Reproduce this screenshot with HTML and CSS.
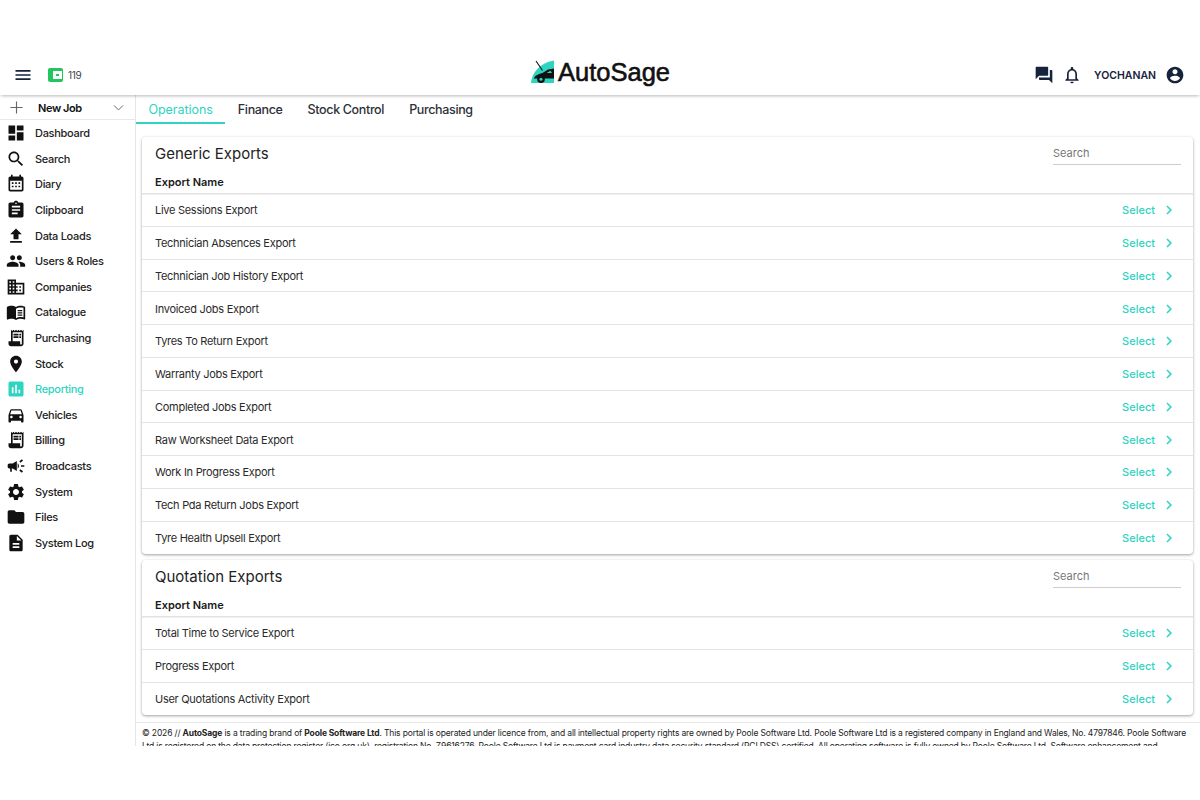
FILE: index.html
```html
<!DOCTYPE html>
<html lang="en">
<head>
<meta charset="utf-8">
<title>AutoSage</title>
<link rel="stylesheet" href="styles.css">
</head>
<body>
<svg class="defs" width="0" height="0" aria-hidden="true">
<symbol id="chev" viewBox="0 0 24 24"><path d="M10 6L8.590 7.410 13.170 12l-4.580 4.590L10 18l6-6z"/></symbol>
</svg>
<header class="topbar">
  <div class="top-left">
    <svg class="ico menu" viewBox="0 0 24 24"><path d="M3 18h18v-2H3v2zm0-5h18v-2H3v2zm0-7v2h18V6H3z"/></svg>
    <span class="wallet"><span class="wallet-in"></span></span>
    <span class="count">119</span>
  </div>
  <div class="logo">
    <svg class="logo-mark" viewBox="0 0 25 24"><path fill="#2dd4bf" d="M1 23C1.500 14 9 3 24 0.500V23z"/><path fill="none" stroke="#111" stroke-width="1.100" d="M6 1L12.500 10.500"/><path fill="#111" d="M4 18C5.500 15 9 14 12.500 13L18 9.500L24 8.500V18.500H4z"/><path fill="#2dd4bf" d="M16.500 13L20.500 10.800L22 13z"/><circle cx="11" cy="19.300" r="3.800" fill="#111"/><circle cx="11" cy="19.300" r="1.500" fill="#2dd4bf"/></svg>
    <span class="logo-text">AutoSage</span>
  </div>
  <div class="top-right">
    <svg class="ico" viewBox="0 0 24 24"><path d="M21 6h-2v9H6v2c0 .55.45 1 1 1h11l4 4V7c0-.55-.45-1-1-1zm-4 6V3c0-.55-.45-1-1-1H3c-.55 0-1 .45-1 1v14l4-4h10c.55 0 1-.45 1-1z"/></svg>
    <svg class="ico" viewBox="0 0 24 24"><path d="M12 22c1.100 0 2-.9 2-2h-4c0 1.100.9 2 2 2zm6-6v-5c0-3.070-1.630-5.640-4.500-6.320V4c0-.83-.67-1.500-1.500-1.500s-1.500.67-1.500 1.500v.68C7.640 5.360 6 7.920 6 11v5l-2 2v1h16v-1l-2-2zm-2 1H8v-6c0-2.480 1.510-4.500 4-4.500s4 2.020 4 4.500v6z"/></svg>
    <span class="user">YOCHANAN</span>
    <svg class="ico" viewBox="0 0 24 24"><path d="M12 2C6.480 2 2 6.480 2 12s4.480 10 10 10 10-4.480 10-10S17.520 2 12 2zm0 3c1.660 0 3 1.340 3 3s-1.340 3-3 3-3-1.340-3-3 1.340-3 3-3zm0 14.200c-2.500 0-4.710-1.280-6-3.220.03-1.990 4-3.080 6-3.080 1.990 0 5.970 1.090 6 3.080-1.290 1.940-3.500 3.220-6 3.220z"/></svg>
  </div>
</header>
<div class="shell">
  <aside class="side">
    <div class="newjob">
      <svg class="thin" viewBox="0 0 16 16"><path d="M8 1.500v13M1.500 8h13"/></svg>
      <span class="newjob-label">New Job</span>
      <svg class="thin small" viewBox="0 0 16 16"><path d="M2.500 5.500L8 11l5.500-5.500"/></svg>
    </div>
    <nav class="nav">
      <a class="item"><svg viewBox="0 0 24 24"><path d="M3 13h8V3H3v10zm0 8h8v-6H3v6zm10 0h8V11h-8v10zm0-18v6h8V3h-8z"/></svg>Dashboard</a>
      <a class="item"><svg viewBox="0 0 24 24"><path d="M15.500 14h-.79l-.28-.27C15.410 12.590 16 11.110 16 9.500 16 5.910 13.090 3 9.500 3S3 5.910 3 9.500 5.910 16 9.500 16c1.610 0 3.090-.59 4.230-1.570l.27.28v.79l5 4.990L20.490 19l-4.990-5zm-6 0C7.010 14 5 11.990 5 9.500S7.010 5 9.500 5 14 7.010 14 9.500 11.990 14 9.500 14z"/></svg>Search</a>
      <a class="item"><svg viewBox="0 0 24 24"><path d="M19 3h-1V1h-2v2H8V1H6v2H5c-1.110 0-1.990.9-1.990 2L3 19c0 1.100.89 2 2 2h14c1.100 0 2-.9 2-2V5c0-1.100-.9-2-2-2zm0 16H5V8h14v11zM7 10h2v2H7zm4 0h2v2h-2zm4 0h2v2h-2zm-8 4h2v2H7zm4 0h2v2h-2zm4 0h2v2h-2z"/></svg>Diary</a>
      <a class="item"><svg viewBox="0 0 24 24"><path d="M19 3h-4.180C14.400 1.840 13.300 1 12 1c-1.300 0-2.400.84-2.820 2H5c-1.100 0-2 .9-2 2v14c0 1.100.9 2 2 2h14c1.100 0 2-.9 2-2V5c0-1.100-.9-2-2-2zm-7 0c.55 0 1 .45 1 1s-.45 1-1 1-1-.45-1-1 .45-1 1-1zm2 14H7v-2h7v2zm3-4H7v-2h10v2zm0-4H7V7h10v2z"/></svg>Clipboard</a>
      <a class="item"><svg viewBox="0 0 24 24"><path d="M9 16h6v-6h4l-7-7-7 7h4zm-4 2h14v2H5z"/></svg>Data Loads</a>
      <a class="item"><svg viewBox="0 0 24 24"><path d="M16 11c1.660 0 2.990-1.340 2.990-3S17.660 5 16 5c-1.660 0-3 1.340-3 3s1.340 3 3 3zm-8 0c1.660 0 2.990-1.340 2.990-3S9.660 5 8 5C6.340 5 5 6.340 5 8s1.340 3 3 3zm0 2c-2.330 0-7 1.170-7 3.500V19h14v-2.500c0-2.330-4.670-3.500-7-3.500zm8 0c-.29 0-.62.02-.97.05 1.160.84 1.970 1.970 1.970 3.450V19h6v-2.500c0-2.330-4.670-3.500-7-3.500z"/></svg>Users &amp; Roles</a>
      <a class="item"><svg viewBox="0 0 24 24"><path d="M12 7V3H2v18h20V7H12zM6 19H4v-2h2v2zm0-4H4v-2h2v2zm0-4H4V9h2v2zm0-4H4V5h2v2zm4 12H8v-2h2v2zm0-4H8v-2h2v2zm0-4H8V9h2v2zm0-4H8V5h2v2zm10 12h-8v-2h2v-2h-2v-2h2v-2h-2V9h8v10zm-2-8h-2v2h2v-2zm0 4h-2v2h2v-2z"/></svg>Companies</a>
      <a class="item"><svg viewBox="0 0 24 24"><path d="M21 5c-1.110-.35-2.330-.5-3.500-.5-1.950 0-4.050.4-5.500 1.500-1.450-1.100-3.550-1.500-5.500-1.500S2.450 4.900 1 6v14.650c0 .25.25.5.5.5.1 0 .15-.05.25-.05C3.100 20.450 5.050 20 6.500 20c1.950 0 4.050.4 5.500 1.500 1.350-.85 3.800-1.500 5.500-1.500 1.650 0 3.350.3 4.750 1.050.1.05.15.05.25.05.25 0 .5-.25.5-.5V6c-.6-.45-1.250-.75-2-1zm0 13.500c-1.100-.35-2.300-.5-3.500-.5-1.700 0-4.150.65-5.500 1.500V8c1.350-.85 3.800-1.500 5.500-1.500 1.200 0 2.400.15 3.500.5v11.500z"/><path d="M14 9.500h5.500V11H14zm0 2.700h5.500v1.500H14zm0 2.700h5.500v1.500H14z"/></svg>Catalogue</a>
      <a class="item"><svg viewBox="0 0 24 24"><path d="M19.500 3.500L18 2l-1.500 1.500L15 2l-1.500 1.500L12 2l-1.500 1.500L9 2 7.500 3.500 6 2v14H3v3c0 1.660 1.340 3 3 3h12c1.660 0 3-1.340 3-3V2l-1.500 1.500zM19 19c0 .55-.45 1-1 1s-1-.45-1-1v-3H8V5h11v14z"/><path d="M9 7h6v2H9zm7 0h2v2h-2zM9 10h6v2H9zm7 0h2v2h-2z"/></svg>Purchasing</a>
      <a class="item"><svg viewBox="0 0 24 24"><path d="M12 2C8.130 2 5 5.130 5 9c0 5.250 7 13 7 13s7-7.750 7-13c0-3.870-3.130-7-7-7zm0 9.500c-1.380 0-2.500-1.120-2.500-2.500s1.120-2.500 2.500-2.500 2.500 1.120 2.500 2.500-1.120 2.500-2.500 2.500z"/></svg>Stock</a>
      <a class="item active"><svg viewBox="0 0 24 24"><path d="M19 3H5c-1.100 0-2 .9-2 2v14c0 1.100.9 2 2 2h14c1.100 0 2-.9 2-2V5c0-1.100-.9-2-2-2zM9 17H7v-7h2v7zm4 0h-2V7h2v10zm4 0h-2v-4h2v4z"/></svg>Reporting</a>
      <a class="item"><svg viewBox="0 0 24 24"><path d="M18.920 6.010C18.720 5.420 18.160 5 17.500 5h-11c-.66 0-1.210.42-1.420 1.010L3 12v8c0 .55.45 1 1 1h1c.55 0 1-.45 1-1v-1h12v1c0 .55.45 1 1 1h1c.55 0 1-.45 1-1v-8l-2.080-5.990zM6.500 16c-.83 0-1.500-.67-1.500-1.500S5.670 13 6.500 13s1.500.67 1.500 1.500S7.330 16 6.500 16zm11 0c-.83 0-1.500-.67-1.500-1.500s.67-1.500 1.500-1.500 1.500.67 1.500 1.500-.67 1.500-1.500 1.500zM5 11l1.500-4.500h11L19 11H5z"/></svg>Vehicles</a>
      <a class="item"><svg viewBox="0 0 24 24"><path d="M19.500 3.500L18 2l-1.500 1.500L15 2l-1.500 1.500L12 2l-1.500 1.500L9 2 7.500 3.500 6 2v14H3v3c0 1.660 1.340 3 3 3h12c1.660 0 3-1.340 3-3V2l-1.500 1.500zM19 19c0 .55-.45 1-1 1s-1-.45-1-1v-3H8V5h11v14z"/><path d="M9 7h6v2H9zm7 0h2v2h-2zM9 10h6v2H9zm7 0h2v2h-2z"/></svg>Billing</a>
      <a class="item"><svg viewBox="0 0 24 24"><path d="M18 11v2h4v-2h-4zm-2 6.610c.96.71 2.210 1.650 3.200 2.390.4-.53.8-1.070 1.200-1.600-.99-.74-2.240-1.680-3.200-2.400-.4.54-.8 1.080-1.200 1.610zM20.400 5.600c-.4-.53-.8-1.070-1.200-1.600-.99.74-2.240 1.680-3.200 2.400.4.53.8 1.070 1.200 1.600.96-.72 2.210-1.650 3.200-2.400zM4 9c-1.100 0-2 .9-2 2v2c0 1.100.9 2 2 2h1v4h2v-4h1l5 3V6L8 9H4zm11.500 3c0-1.330-.58-2.530-1.500-3.350v6.690c.92-.81 1.500-2.010 1.500-3.340z"/></svg>Broadcasts</a>
      <a class="item"><svg viewBox="0 0 24 24"><path d="M19.140 12.940c.04-.3.06-.61.06-.94 0-.32-.02-.64-.07-.94l2.030-1.580c.18-.14.23-.41.12-.61l-1.920-3.320c-.12-.22-.37-.29-.59-.22l-2.390.96c-.5-.38-1.030-.7-1.620-.94l-.36-2.540c-.04-.24-.24-.41-.48-.41h-3.840c-.24 0-.43.17-.47.41l-.36 2.540c-.59.24-1.130.57-1.620.94l-2.390-.96c-.22-.08-.47 0-.59.22L2.740 8.870c-.12.21-.08.47.12.61l2.030 1.580c-.05.3-.09.63-.09.94s.02.64.07.94l-2.030 1.580c-.18.14-.23.41-.12.61l1.920 3.320c.12.22.37.29.59.22l2.390-.96c.5.38 1.030.7 1.620.94l.36 2.540c.05.24.24.41.48.41h3.840c.24 0 .44-.17.47-.41l.36-2.540c.59-.24 1.130-.56 1.620-.94l2.390.96c.22.08.47 0 .59-.22l1.920-3.320c.12-.22.07-.47-.12-.61l-2.010-1.580zM12 15.600c-1.980 0-3.600-1.620-3.600-3.600s1.620-3.600 3.600-3.600 3.600 1.620 3.600 3.600-1.620 3.600-3.600 3.600z"/></svg>System</a>
      <a class="item"><svg viewBox="0 0 24 24"><path d="M10 4H4c-1.100 0-1.990.9-1.990 2L2 18c0 1.100.9 2 2 2h16c1.100 0 2-.9 2-2V8c0-1.100-.9-2-2-2h-8l-2-2z"/></svg>Files</a>
      <a class="item"><svg viewBox="0 0 24 24"><path d="M14 2H6c-1.100 0-1.990.9-1.990 2L4 20c0 1.100.89 2 1.990 2H18c1.100 0 2-.9 2-2V8l-6-6zm2 16H8v-2h8v2zm0-4H8v-2h8v2zm-3-5V3.500L18.500 9H13z"/></svg>System Log</a>
    </nav>
  </aside>
  <main class="main">
    <div class="tabs">
      <a class="tab on">Operations</a><a class="tab">Finance</a><a class="tab">Stock Control</a><a class="tab">Purchasing</a>
    </div>
    <div class="content">
      <section class="card">
        <div class="card-head"><h2>Generic Exports</h2><span class="search">Search</span></div>
        <div class="th">Export Name</div>
        <div class="row"><span>Live Sessions Export</span><a class="sel">Select<svg><use href="#chev"/></svg></a></div>
        <div class="row"><span>Technician Absences Export</span><a class="sel">Select<svg><use href="#chev"/></svg></a></div>
        <div class="row"><span>Technician Job History Export</span><a class="sel">Select<svg><use href="#chev"/></svg></a></div>
        <div class="row"><span>Invoiced Jobs Export</span><a class="sel">Select<svg><use href="#chev"/></svg></a></div>
        <div class="row"><span>Tyres To Return Export</span><a class="sel">Select<svg><use href="#chev"/></svg></a></div>
        <div class="row"><span>Warranty Jobs Export</span><a class="sel">Select<svg><use href="#chev"/></svg></a></div>
        <div class="row"><span>Completed Jobs Export</span><a class="sel">Select<svg><use href="#chev"/></svg></a></div>
        <div class="row"><span>Raw Worksheet Data Export</span><a class="sel">Select<svg><use href="#chev"/></svg></a></div>
        <div class="row"><span>Work In Progress Export</span><a class="sel">Select<svg><use href="#chev"/></svg></a></div>
        <div class="row"><span>Tech Pda Return Jobs Export</span><a class="sel">Select<svg><use href="#chev"/></svg></a></div>
        <div class="row"><span>Tyre Health Upsell Export</span><a class="sel">Select<svg><use href="#chev"/></svg></a></div>
      </section>
      <section class="card">
        <div class="card-head"><h2>Quotation Exports</h2><span class="search">Search</span></div>
        <div class="th">Export Name</div>
        <div class="row"><span>Total Time to Service Export</span><a class="sel">Select<svg><use href="#chev"/></svg></a></div>
        <div class="row"><span>Progress Export</span><a class="sel">Select<svg><use href="#chev"/></svg></a></div>
        <div class="row"><span>User Quotations Activity Export</span><a class="sel">Select<svg><use href="#chev"/></svg></a></div>
      </section>
    </div>
    <footer class="foot">
      <p>© 2026 // <b>AutoSage</b> is a trading brand of <b>Poole Software Ltd</b>. This portal is operated under licence from, and all intellectual property rights are owned by Poole Software Ltd. Poole Software Ltd is a registered company in England and Wales, No. 4797846. Poole Software Ltd is registered on the data protection register (ico.org.uk), registration No. Z9616276. Poole Software Ltd is payment card industry data security standard (PCI DSS) certified. All operating software is fully owned by Poole Software Ltd. Software enhancement and refinement is ongoing.</p>
    </footer>
  </main>
</div>
</body>
</html>
```
FILE: styles.css
```css
* { box-sizing: border-box; }
html, body { margin: 0; background: #fff; }
body {
  padding-top: 50px;
  height: 800px;
  overflow: hidden;
  font-family: "Inter", "Liberation Sans", sans-serif;
  font-size: 11px;
  color: #1f2430;
}
.defs { position: absolute; }
.topbar {
  height: 45px;
  display: grid;
  grid-template-columns: 1fr auto 1fr;
  align-items: center;
  padding: 4px 15px 0;
  background: #fff;
  box-shadow: 0 2px 3px -1px rgba(0,0,0,.28);
  position: relative;
}
.ico { width: 20px; height: 20px; fill: #15233b; flex: none; }
.menu { margin-left: -2px; }
.top-left { display: flex; align-items: center; }
.wallet {
  width: 15px; height: 14px; margin-left: 15px;
  background: #22c55e; border-radius: 2px;
  display: flex; align-items: center; justify-content: flex-end;
}
.wallet-in { width: 9px; height: 8px; background: #22c55e; border: 3px solid #fff; margin-right: 1px; }
.count { margin-left: 5px; font-size: 10px; letter-spacing: -.3px; color: #3a4452; }
.logo { display: flex; align-items: center; gap: 3px; margin-bottom: 6px; }
.logo-mark { width: 25px; height: 24px; }
.logo-text {
  font-family: "Liberation Sans", sans-serif;
  font-size: 25.500px; line-height: 30px; color: #111;
  -webkit-text-stroke: .6px #111;
}
.top-right { display: flex; align-items: center; justify-content: flex-end; }
.top-right .ico + .ico { margin-left: 8px; }
.user { margin: 1px 9px 0 12px; font-size: 10.500px; font-weight: 600; letter-spacing: 0; color: #15233b; }
.shell { display: flex; height: 651px; }
.side { width: 136px; flex: none; border-right: 1px solid #e6e6e6; padding-top: 1px; }
.newjob {
  height: 24px; display: flex; align-items: center;
  padding: 0 10px 0 9px;
  border-bottom: 1px solid #e8e8e8;
}
.thin { width: 15px; height: 15px; fill: none; stroke: #666; stroke-width: 1.200; flex: none; }
.thin.small { width: 13px; height: 13px; }
.newjob-label { flex: 1; margin-left: 14px; font-weight: 600; font-size: 11px; letter-spacing: -.4px; color: #111; }
.nav { display: flex; flex-direction: column; padding-top: .5px; }
.item {
  height: 25.600px; display: flex; align-items: center; gap: 9px;
  padding-left: 6px;
  font-weight: 500; font-size: 11px; letter-spacing: -.3px; color: #222;
}
.item svg { width: 20px; height: 20px; fill: #111; flex: none; }
.item.active { color: #2dd4bf; }
.item.active svg { fill: #2dd4bf; }
.main { flex: 1; min-width: 0; display: flex; flex-direction: column; padding-top: 1px; }
.tabs { height: 28px; display: flex; flex: none; }
.tab {
  height: 28px; padding: 0 12.500px; display: flex; align-items: center;
  font-size: 12.500px; font-weight: 500; letter-spacing: -.35px; color: #2c3038;
  border-bottom: 2px solid transparent;
}
.tab.on { color: #2dd4bf; border-bottom-color: #2dd4bf; font-weight: 400; letter-spacing: -.05px; }
.content { flex: 1; padding: 13px 7px 0 6px; display: flex; flex-direction: column; gap: 6.500px; }
.card { background: #fff; border-radius: 4px; box-shadow: 0 1px 3px rgba(0,0,0,.38); }
.card-head { height: 33px; padding: 0 12px 0 13px; display: flex; align-items: center; justify-content: space-between; }
.card-head h2 { margin: 0; font-size: 15px; font-weight: 400; color: #222; }
.search { width: 128px; height: 22px; border-bottom: 1px solid #cfcfcf; color: #777; font-size: 11px; line-height: 20px; }
.th { height: 24px; padding: 0 13px; display: flex; align-items: center; font-weight: 600; font-size: 11px; color: #1a1a1a; border-bottom: 1px solid #e4e4e4; box-shadow: 0 1px 0 #f0f0f0; }
.row {
  height: 32.750px; padding: 1px 15px 0 13px;
  display: flex; align-items: center; justify-content: space-between;
  font-size: 11px; letter-spacing: -.28px; color: #2a2a2a; border-bottom: 1px solid #e4e4e4;
}
.row:last-child { border-bottom: 0; height: 32px; }
.sel { display: flex; align-items: center; gap: 5px; color: #2dd4bf; font-size: 11px; font-weight: 500; letter-spacing: 0; }
.sel svg { width: 18px; height: 18px; fill: #2dd4bf; }
.foot { margin-top: 7px; height: 24px; overflow: hidden; border-top: 1px solid #e8e8e8; padding: 4px 6px 0; }
.foot p { margin: 0; font-size: 8.500px; line-height: 12.500px; letter-spacing: -.15px; color: #222; }
.foot b { font-weight: 700; }
```
